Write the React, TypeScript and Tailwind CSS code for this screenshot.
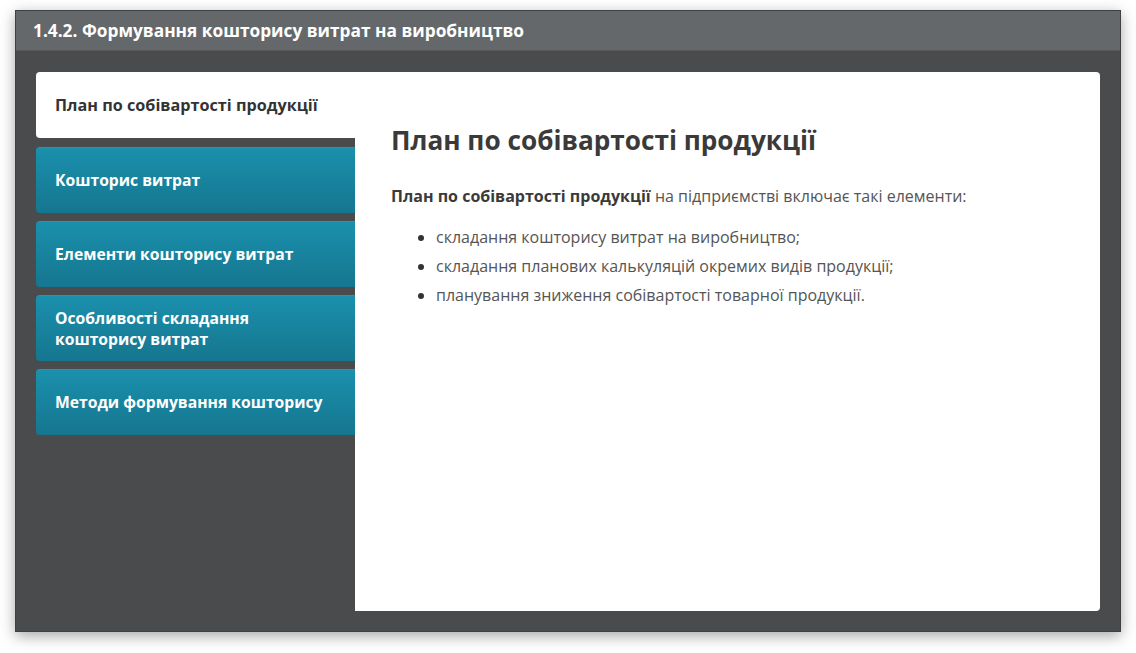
import React from "react";

const tabs = [
  "Кошторис витрат",
  "Елементи кошторису витрат",
  "Особливості складання кошторису витрат",
  "Методи формування кошторису",
];

export default function App() {
  return (
    <div
      className="w-[1136px] h-[653px] bg-white pt-[10px] pl-[15px]"
      style={{ fontFamily: '"Open Sans", "Noto Sans", sans-serif' }}
    >
      <div className="w-[1106px] h-[622px] flex flex-col border border-[#3f4042] bg-[#4a4b4d] shadow-[0_4px_14px_rgba(0,0,0,0.35)]">
        <div className="h-[40px] shrink-0 bg-[#65686b] border-b border-[#55585b] flex items-center pl-[17px]">
          <span className="text-white font-bold text-[17.3px]">
            1.4.2. Формування кошторису витрат на виробництво
          </span>
        </div>
        <div className="flex-1 flex pt-[21px] pl-[20px] pr-[20px] pb-[20px]">
          <div className="w-[319px] shrink-0 flex flex-col">
            <div className="h-[66px] bg-white rounded-l-[4px] flex items-center pl-[19px] text-[#333] font-bold text-[16.2px]">
              План по собівартості продукції
            </div>
            <div className="flex flex-col gap-[8px] mt-[9px]">
              {tabs.map((t) => (
                <div
                  key={t}
                  className="h-[66px] rounded-l-[4px] bg-gradient-to-b from-[#1a90ad] to-[#16768f] border-t border-[#1c9ab8] flex items-center pl-[19px] pr-[8px] text-white font-bold text-[15.7px] leading-[21px]"
                >
                  <span className={t.length > 30 ? "max-w-[230px]" : ""}>{t}</span>
                </div>
              ))}
            </div>
          </div>
          <div className="flex-1 bg-white rounded-tr-[4px] rounded-br-[4px] pl-[36px] pr-[30px] pt-[50px] text-[#3c3c3c]">
            <h1 className="text-[26.2px] font-bold leading-[36px] text-[#3a3a3a]">
              План по собівартості продукції
            </h1>
            <p className="mt-[27px] text-[16px] leading-[22px] text-[#555]">
              <b className="text-[#3a3a3a]">План по собівартості продукції</b> на підприємстві включає такі елементи:
            </p>
            <ul className="mt-[16px] list-disc pl-[45px] text-[16px] leading-[29px] text-[#555] marker:text-[#333]">
              <li>складання кошторису витрат на виробництво;</li>
              <li>складання планових калькуляцій окремих видів продукції;</li>
              <li>планування зниження собівартості товарної продукції.</li>
            </ul>
          </div>
        </div>
      </div>
    </div>
  );
}
